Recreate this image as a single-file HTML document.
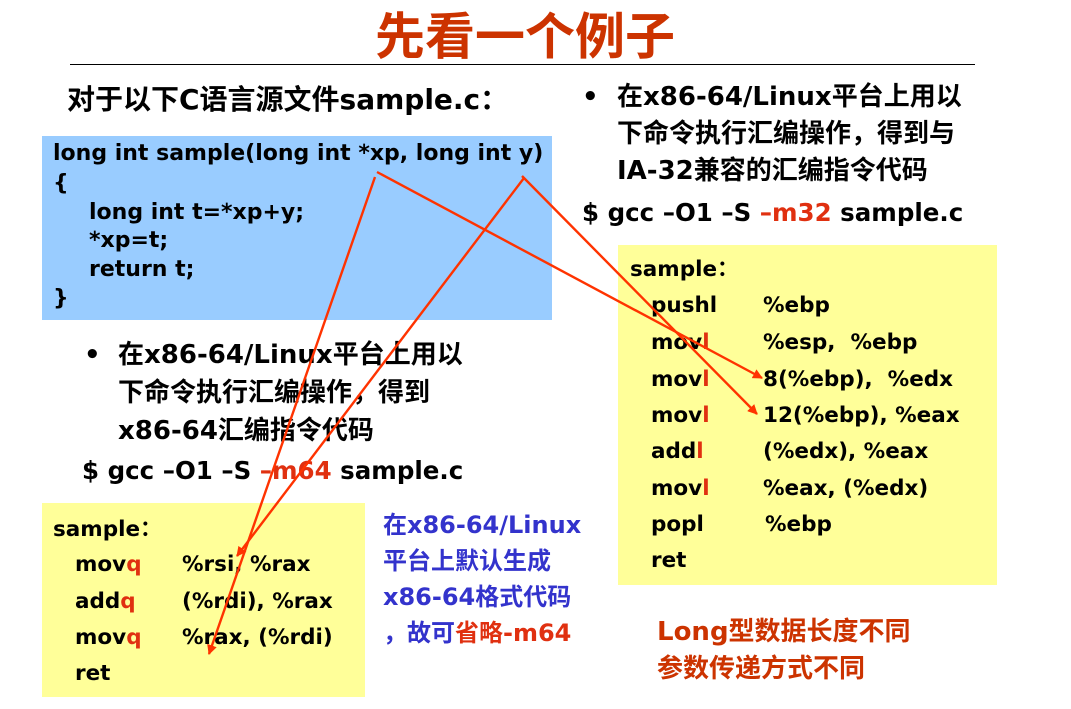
<!DOCTYPE html>
<html><head><meta charset="utf-8"><style>
body{margin:0;width:1071px;height:709px;background:#fff;position:relative;overflow:hidden;font-family:"DejaVu Sans","Noto Sans CJK SC",sans-serif;font-weight:bold;color:#000}
.a{position:absolute;white-space:pre;line-height:1}
.r{color:#e03010}
.c{font-size:22px}
.s{font-size:21.5px}
.t{font-size:26px}
.box{position:absolute}
</style></head><body>
<div class="a" style="left:375px;top:8px;font-size:50px;color:#cc3300;font-family:'Noto Sans CJK SC',sans-serif;font-weight:bold">先看一个例子</div>
<div class="box" style="left:70px;top:64px;width:905px;height:1px;background:#000"></div>

<div class="a" style="left:67px;top:86px;font-size:28px">对于以下C语言源文件sample.c：</div>

<div class="box" style="left:42px;top:136px;width:510px;height:184px;background:#99ccff"></div>
<div class="a c" style="left:53px;top:143px">long int sample(long int *xp, long int y)</div>
<div class="a c" style="left:53px;top:173px">{</div>
<div class="a c" style="left:89px;top:202px">long int t=*xp+y;</div>
<div class="a c" style="left:89px;top:230px">*xp=t;</div>
<div class="a c" style="left:89px;top:259px">return t;</div>
<div class="a c" style="left:53px;top:288px">}</div>

<div class="a t" style="left:582px;top:84px">•</div>
<div class="a t" style="left:617px;top:84px">在x86-64/Linux平台上用以</div>
<div class="a t" style="left:617px;top:121px">下命令执行汇编操作，得到与</div>
<div class="a t" style="left:617px;top:158px">IA-32兼容的汇编指令代码</div>
<div class="a" style="left:582px;top:201px;font-size:24.5px">$ gcc –O1 –S <span class="r">–m32</span> sample.c</div>

<div class="box" style="left:618px;top:245px;width:379px;height:340px;background:#ffff99"></div>
<div class="a s" style="left:630px;top:259px">sample：</div>
<div class="a s" style="left:651px;top:295px">pushl</div><div class="a s" style="left:763px;top:295px">%ebp</div>
<div class="a s" style="left:651px;top:332px">mov<span class="r">l</span></div><div class="a s" style="left:763px;top:332px">%esp,  %ebp</div>
<div class="a s" style="left:651px;top:369px">mov<span class="r">l</span></div><div class="a s" style="left:763px;top:369px">8(%ebp),  %edx</div>
<div class="a s" style="left:651px;top:405px">mov<span class="r">l</span></div><div class="a s" style="left:763px;top:405px">12(%ebp), %eax</div>
<div class="a s" style="left:651px;top:441px">add<span class="r">l</span></div><div class="a s" style="left:763px;top:441px">(%edx), %eax</div>
<div class="a s" style="left:651px;top:478px">mov<span class="r">l</span></div><div class="a s" style="left:763px;top:478px">%eax, (%edx)</div>
<div class="a s" style="left:651px;top:514px">popl</div><div class="a s" style="left:765px;top:514px">%ebp</div>
<div class="a s" style="left:651px;top:550px">ret</div>

<div class="a t" style="left:84px;top:342px">•</div>
<div class="a t" style="left:118px;top:342px">在x86-64/Linux平台上用以</div>
<div class="a t" style="left:118px;top:380px">下命令执行汇编操作，得到</div>
<div class="a t" style="left:118px;top:418px">x86-64汇编指令代码</div>
<div class="a" style="left:82px;top:459px;font-size:24.5px">$ gcc –O1 –S <span class="r">–m64</span> sample.c</div>

<div class="box" style="left:42px;top:503px;width:323px;height:194px;background:#ffff99"></div>
<div class="a s" style="left:53px;top:519px">sample：</div>
<div class="a s" style="left:75px;top:554px">mov<span class="r">q</span></div><div class="a s" style="left:182px;top:554px">%rsi, %rax</div>
<div class="a s" style="left:75px;top:591px">add<span class="r">q</span></div><div class="a s" style="left:182px;top:591px">(%rdi), %rax</div>
<div class="a s" style="left:75px;top:627px">mov<span class="r">q</span></div><div class="a s" style="left:182px;top:627px">%rax, (%rdi)</div>
<div class="a s" style="left:75px;top:663px">ret</div>

<div class="a" style="left:383px;top:513px;font-size:24px;color:#3333cc">在x86-64/Linux</div>
<div class="a" style="left:383px;top:549px;font-size:24px;color:#3333cc">平台上默认生成</div>
<div class="a" style="left:383px;top:585px;font-size:24px;color:#3333cc">x86-64格式代码</div>
<div class="a" style="left:383px;top:621px;font-size:24px;color:#3333cc">，故可<span class="r">省略-m64</span></div>

<div class="a" style="left:657px;top:619px;font-size:26px;color:#cc3300">Long型数据长度不同</div>
<div class="a" style="left:657px;top:656px;font-size:26px;color:#cc3300">参数传递方式不同</div>

<svg width="1071" height="709" style="position:absolute;left:0;top:0">
<defs><marker id="h" markerWidth="10" markerHeight="10" refX="9" refY="5" orient="auto" markerUnits="userSpaceOnUse"><path d="M0,0 L10,5 L0,10 z" fill="#ff3300"/></marker></defs>
<g stroke="#ff3300" stroke-width="2.4" fill="none">
<line x1="375" y1="177" x2="209" y2="654" marker-end="url(#h)"/>
<line x1="524" y1="178" x2="237" y2="556" marker-end="url(#h)"/>
<line x1="377" y1="172" x2="762" y2="378" marker-end="url(#h)"/>
<line x1="522" y1="176" x2="757" y2="414" marker-end="url(#h)"/>
</g></svg>
</body></html>
